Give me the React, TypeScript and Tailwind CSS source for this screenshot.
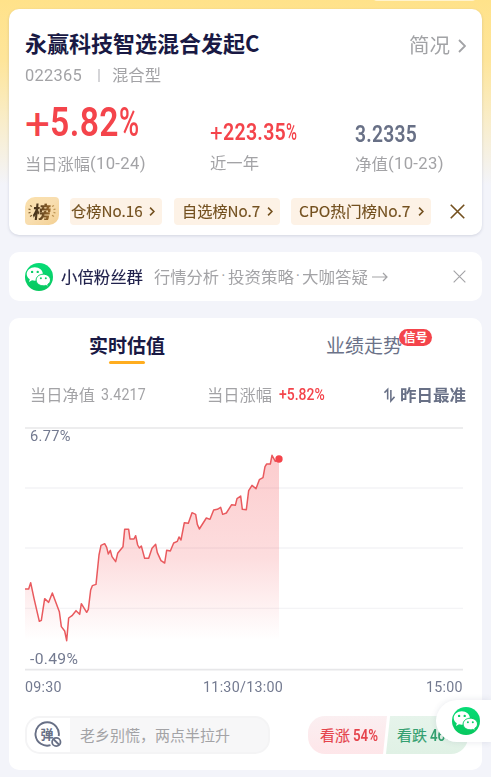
import { useLayoutEffect, useRef, useState, type ReactNode } from 'react';

const CJK = 'font-["Noto_Sans_CJK_SC",sans-serif]';
const DIN = 'font-["Roboto","Noto_Sans_CJK_SC",sans-serif]';
/* Weight between regular and bold for Chinese text. */
const SEMI = '[-webkit-text-stroke:0.15px_currentColor]';

/* Text condensed or widened horizontally so that it fills a fixed width. */
function Fit({ w, className = '', children }: { w: number; className?: string; children: ReactNode }) {
  const ref = useRef<HTMLSpanElement>(null);
  const [k, setK] = useState(1);
  useLayoutEffect(() => {
    if (ref.current) setK(w / ref.current.offsetWidth);
  }, [w]);
  return (
    <span className={`block shrink-0 leading-none ${className}`} style={{ width: w }}>
      <span ref={ref} className="inline-block origin-left whitespace-nowrap" style={{ transform: `scaleX(${k})` }}>
        {children}
      </span>
    </span>
  );
}

function Chevron({ className }: { className: string }) {
  return (
    <svg viewBox="0 0 8 14" fill="none" stroke="currentColor" className={`shrink-0 ${className}`}>
      <path d="M1 1l6 6-6 6" vectorEffect="non-scaling-stroke" />
    </svg>
  );
}

function Cross({ className }: { className: string }) {
  return (
    <svg viewBox="0 0 14 14" fill="none" stroke="currentColor" className={`shrink-0 ${className}`}>
      <path d="M.7.7l12.6 12.6M13.3.7L.7 13.3" />
    </svg>
  );
}

function WeChat({ className }: { className: string }) {
  return (
    <svg viewBox="0 0 28 28" className={`shrink-0 ${className}`}>
      <defs>
        <linearGradient id="wx" x1="0" y1="0" x2="0" y2="1">
          <stop offset="0" stopColor="#06dc76" />
          <stop offset="1" stopColor="#08c85f" />
        </linearGradient>
      </defs>
      <circle cx="14" cy="14" r="14" fill="url(#wx)" />
      <path d="M9.800 4.200c-4.500 0-8.100 3-8.100 6.800 0 2.200 1.200 4.100 3.100 5.300l-.8 2.600 3-1.600c.9.300 1.800.4 2.800.4 4.500 0 8.100-3 8.100-6.700s-3.600-6.800-8.100-6.800z" fill="#fff" />
      <path d="M18.300 11.200c-4 0-7.200 2.600-7.200 5.800s3.200 5.800 7.200 5.800c.9 0 1.700-.1 2.500-.4l2.500 1.300-.6-2.200c1.700-1.100 2.800-2.700 2.800-4.500 0-3.200-3.200-5.800-7.200-5.800z" fill="#fff" stroke="#0acd67" strokeWidth="1" />
      <g fill="#0acd67">
        <circle cx="7.100" cy="8.900" r="1.200" />
        <circle cx="12.700" cy="8.900" r="1.200" />
        <circle cx="15.900" cy="15.300" r="1" />
        <circle cx="20.800" cy="15.300" r="1" />
      </g>
    </svg>
  );
}

function RankBadge() {
  return (
    <div className="flex h-7 w-[34px] shrink-0 items-center justify-center rounded-[4px] rounded-tl-[10px] rounded-br-[10px] bg-gradient-to-br from-[#fbe0ab] via-[#f8deb0] to-[#f3cf91]">
      <svg viewBox="0 0 5 14" className="h-3.5 w-[5px]" stroke="#80602f" strokeWidth="1.300" fill="none">
        <path d="M2 1.500l2 1M.5 5l2 .7M.5 9l2-.6M2 12.500l2-1.200" />
      </svg>
      <span className={`${CJK} -skew-x-6 bg-gradient-to-r from-[#3c2c18] to-[#9b6a2c] bg-clip-text text-[18px] leading-none font-black text-transparent`}>榜</span>
      <svg viewBox="0 0 5 14" className="h-3.5 w-[5px]" stroke="#bd9353" strokeWidth="1.300" fill="none">
        <path d="M3 1.500l-2 1M4.500 5l-2 .7M4.500 9l-2-.6M3 12.500l-2-1.200" />
      </svg>
    </div>
  );
}

function RankPill({ text, w, className }: { text: string; w: number; className: string }) {
  return (
    <div className={`flex h-[27px] shrink-0 items-center justify-between rounded-[4px] bg-[#fdf2e6] pr-[7px] text-[#73501f] ${className}`}>
      <Fit w={w} className={`${CJK} ${SEMI} pb-[2px] text-[15px]`}>{text}</Fit>
      <Chevron className="h-[9px] w-[6px] stroke-[1.600]" />
    </div>
  );
}

/* Caption under a figure: a Chinese name followed by a date in brackets. */
function Caption({ name, w, date }: { name: string; w: number; date?: string }) {
  return (
    <div className="flex items-center pt-[2px] text-[#a3a3a6]">
      <Fit w={w} className={`${CJK} text-[16px]`}>{name}</Fit>
      {date && <Fit w={56} className={`${DIN} pt-px text-[17px] tracking-[0.3px]`}>{date}</Fit>}
    </div>
  );
}

function Summary() {
  return (
    <section className="h-[226px] rounded-[10px] bg-white pt-[19px] pr-4 pl-4 shadow-[0_1px_3px_rgba(60,70,110,0.18)]">
      <div className="flex h-[31px] items-center justify-between">
        <Fit w={234} className={`${CJK} pb-[3px] text-[22px] font-bold text-[#191944]`}>永赢科技智选混合发起C</Fit>
        <div className="flex items-center gap-[8px] pt-1 text-[#a2a3a6]">
          <Fit w={41} className={`${CJK} pb-px text-[20px]`}>简况</Fit>
          <Chevron className="h-3.5 w-2 stroke-[1.800]" />
        </div>
      </div>
      <div className="flex h-8 items-center text-[#a3a3a6]">
        <Fit w={57} className={`${DIN} text-[17px] tracking-[0.3px]`}>022365</Fit>
        <span className="mr-3 ml-[16px] h-[13px] w-[2px] bg-[#d5d5d8]" />
        <Fit w={49} className={`${CJK} pb-[3px] text-[16px]`}>混合型</Fit>
      </div>
      <div className="grid h-[106px] grid-cols-[185px_144px_1fr]">
        <div>
          <div className="flex h-[61px] items-center text-[#f4444b]">
            <Fit w={25} className={`${DIN} pt-1 text-[44px]`}>+</Fit>
            <Fit w={69} className={`${DIN} pt-[2px] text-[41px] font-semibold tracking-[0.5px]`}>5.82</Fit>
            <Fit w={20} className={`${DIN} pt-[2px] text-[41px] font-medium`}>%</Fit>
          </div>
          <Caption name="当日涨幅" w={65} date="(10-24)" />
        </div>
        <div>
          <div className="flex h-[61px] items-center pt-[21px] text-[#f4444b]">
            <Fit w={13} className={`${DIN} pt-[2px] text-[24px]`}>+</Fit>
            <Fit w={63} className={`${DIN} pt-px text-[23px] font-semibold tracking-[0.3px]`}>223.35</Fit>
            <Fit w={11} className={`${DIN} pt-px text-[23px] font-medium`}>%</Fit>
          </div>
          <Caption name="近一年" w={49} />
        </div>
        <div className="pl-px">
          <div className="flex h-[61px] items-center pt-[26px]">
            <Fit w={62} className={`${DIN} text-[23px] font-semibold tracking-[0.3px] text-[#687086]`}>3.2335</Fit>
          </div>
          <Caption name="净值" w={33} date="(10-23)" />
        </div>
      </div>
      <div className="flex h-7 items-center">
        <RankBadge />
        <RankPill text="仓榜No.16" w={72} className="ml-[11px] w-[92px] pl-px" />
        <RankPill text="自选榜No.7" w={78} className="ml-3 w-[106px] pl-[8px]" />
        <RankPill text="CPO热门榜No.7" w={111} className="ml-[11px] w-[140px] pl-[8px]" />
        <Cross className="ml-[19px] size-[15px] stroke-[1.500] text-[#73501f]" />
      </div>
    </section>
  );
}

function FanGroup() {
  return (
    <section className="mt-[17px] flex h-[49px] items-center rounded-[10px] bg-white px-4">
      <WeChat className="size-[28px]" />
      <Fit w={82} className={`${CJK} ${SEMI} ml-[8px] pb-px text-[16px] text-[#20214c]`}>小倍粉丝群</Fit>
      <div className="ml-[11px] flex w-[214px] items-center justify-between pb-px text-[#a3a3a6]">
        <Fit w={65} className={`${CJK} text-[16px]`}>行情分析</Fit>
        <span className={`${DIN} w-1 text-center text-[16px] leading-none`}>·</span>
        <Fit w={66} className={`${CJK} text-[16px]`}>投资策略</Fit>
        <span className={`${DIN} w-1 text-center text-[16px] leading-none`}>·</span>
        <Fit w={66} className={`${CJK} text-[16px]`}>大咖答疑</Fit>
      </div>
      <svg viewBox="0 0 16 10" className="ml-1 h-2.5 w-4" fill="none" stroke="#a3a3a6" strokeWidth="1.200">
        <path d="M0 5h15M11 1l4 4-4 4" />
      </svg>
      <Cross className="ml-auto size-[13px] stroke-[1.200] text-[#a3a3a6]" />
    </section>
  );
}

/* Intraday estimate, in units of a third of a pixel. */
const LINE =
  '75,447 86,447 92,428 102,475 118,544 124,541 134,476 146,487 157,459 178,515 184,560 194,573 200,602 206,534 216,527 228,512 239,523 244,491 260,517 265,508 272,450 277,437 288,433 297,345 303,316 314,311 320,322 325,342 331,331 336,350 347,365 353,340 369,320 374,268 386,268 390,297 402,297 407,287 413,315 418,324 424,318 434,355 446,355 456,325 467,313 472,338 483,362 494,369 500,331 511,333 521,309 532,304 537,291 543,300 553,248 565,250 576,218 587,223 592,253 598,267 619,234 630,238 641,210 652,208 662,202 668,223 679,219 695,194 706,196 711,176 722,168 727,208 739,209 746,152 756,136 768,146 778,119 789,113 795,80 800,72 811,72 816,46 826,64 837,57';

function Chart() {
  return (
    <div className="relative h-[244px] w-[438px]">
      <svg viewBox="75 -39 1314 732" className="block h-full w-full">
        <defs>
          <linearGradient id="area" gradientUnits="userSpaceOnUse" x1="0" y1="46" x2="0" y2="600">
            <stop offset="0" stopColor="#f5565b" stopOpacity=".3" />
            <stop offset=".55" stopColor="#f5565b" stopOpacity=".2" />
            <stop offset="1" stopColor="#f5565b" stopOpacity="0" />
          </linearGradient>
        </defs>
        <g strokeWidth="4">
          <path d="M75-36H1389M75 689H1389" stroke="#e7e7e9" strokeWidth="5" />
          <path d="M75 144H1389M75 324H1389M75 505H1389" stroke="#f4f4f6" />
        </g>
        <polygon points={`75,605 ${LINE} 837,605`} fill="url(#area)" />
        <polyline points={LINE} fill="none" stroke="#e95a5e" strokeWidth="4.500" strokeLinejoin="round" />
        <circle cx="837" cy="57" r="11" fill="#f4444b" />
      </svg>
      <Fit w={41} className={`${DIN} absolute top-[2px] left-[5px] text-[15px] tracking-[0.3px] text-[#737a90]`}>6.77%</Fit>
      <Fit w={48} className={`${DIN} absolute bottom-[4px] left-[5px] text-[15px] tracking-[0.3px] text-[#737a90]`}>-0.49%</Fit>
    </div>
  );
}

function BottomBar() {
  return (
    <div className="mt-[17px] flex h-[38px] items-center justify-between">
      <div className="flex h-[38px] w-[245px] items-center overflow-hidden rounded-[15px] border-2 border-[#f4f4f5] bg-[#f7f7f8]">
        <div className="flex h-full w-[43px] items-center bg-white pl-[7px]">
          <svg viewBox="0 0 28 28" className="size-7" fill="none" stroke="#687086">
            <path d="M16.500 24.200A11.700 11.700 0 1 1 24.700 15" strokeWidth="1.900" />
            <text x="13" y="18" textAnchor="middle" fontSize="13" fontWeight="700" fill="#687086" stroke="none" fontFamily="Noto Sans CJK SC, sans-serif">弹</text>
            <circle cx="22.300" cy="21" r="4.200" strokeWidth="1.800" />
            <path d="M19.300 18l6 6" strokeWidth="1.800" />
          </svg>
        </div>
        <Fit w={150} className={`${CJK} ml-[10px] pb-[2px] text-[15px] text-[#a3a3a6]`}>老乡别慌，两点半拉升</Fit>
      </div>
      <div className="mr-[-3px] flex h-[38px] w-[161px]">
        <div className="flex w-[79px] items-center rounded-l-[17px] bg-gradient-to-b from-[#fbeff1] to-[#fee6e9] pl-3 text-[#e5444c] [clip-path:polygon(0_0,100%_0,95%_100%,0_100%)]">
          <Fit w={30} className={`${CJK} ${SEMI} pb-[2px] text-[15px]`}>看涨</Fit>
          <Fit w={25} className={`${DIN} ml-[3px] text-[17px] font-semibold`}>54%</Fit>
        </div>
        <div className="-ml-px flex w-[82px] items-center rounded-r-[17px] bg-gradient-to-b from-[#e6f4eb] to-[#e0f1e5] pl-[11px] text-[#34a070] [clip-path:polygon(5%_0,100%_0,100%_100%,0_100%)]">
          <Fit w={30} className={`${CJK} ${SEMI} pb-[2px] text-[15px]`}>看跌</Fit>
          <Fit w={25} className={`${DIN} ml-[3px] text-[17px] font-semibold`}>46%</Fit>
        </div>
      </div>
    </div>
  );
}

function Valuation() {
  return (
    <section className="mt-[17px] h-[452px] rounded-[10px] bg-white px-4">
      <div className="flex h-[54px] pt-[14px] pl-16">
        <div className="flex w-[76px] flex-col items-center">
          <Fit w={76} className={`${CJK} h-[29px] pt-[3px] text-[19px] font-bold text-[#191944]`}>实时估值</Fit>
          <span className="h-[3px] w-9 shrink-0 rounded-full bg-[#ffad1f]" />
        </div>
        <div className="relative ml-[161px]">
          <Fit w={76} className={`${CJK} pt-[3px] text-[19px] text-[#6b7288]`}>业绩走势</Fit>
          <span className={`${CJK} absolute top-[-3px] left-[73px] flex h-[17px] w-[33px] items-center justify-center rounded-full bg-[#f4444b] pb-px text-[12px] leading-none font-bold text-white`}>信号</span>
        </div>
      </div>
      <div className="flex h-[46px] items-center pl-[5px] text-[#a3a3a6]">
        <Fit w={65} className={`${CJK} pb-[3px] text-[16px]`}>当日净值</Fit>
        <Fit w={45} className={`${DIN} ml-[6px] pb-px text-[17px] tracking-[0.3px]`}>3.4217</Fit>
        <Fit w={65} className={`${CJK} ml-[61px] pb-[3px] text-[16px]`}>当日涨幅</Fit>
        <Fit w={46} className={`${DIN} ml-[7px] pb-px text-[17px] font-medium text-[#f4444b]`}>+5.82%</Fit>
        <svg viewBox="0 0 12 16" className="ml-[59px] h-4 w-3" fill="none" stroke="#687086" strokeWidth="1.700">
          <path d="M.5 5.500L4 2v11M7.500 2.500v12L11.500 10" />
        </svg>
        <Fit w={66} className={`${CJK} ml-[5px] pb-[3px] text-[16px] font-bold text-[#687086]`}>昨日最准</Fit>
      </div>
      <div className="h-[9px]" />
      <Chart />
      <div className="grid h-[28px] w-[438px] grid-cols-[178px_223px_37px] items-center pt-[4px] text-[15px] tracking-[0.3px] text-[#737a90]">
        <Fit w={37} className={DIN}>09:30</Fit>
        <Fit w={80} className={DIN}>11:30/13:00</Fit>
        <Fit w={37} className={DIN}>15:00</Fit>
      </div>
      <BottomBar />
    </section>
  );
}

export default function App() {
  return (
    <main className="relative h-[777px] w-[491px] overflow-hidden bg-[#f3f4fa] bg-[linear-gradient(to_bottom,#ffe28a_0,#fee59a_60px,#f9edc9_120px,#f3f4fa_185px)] px-[9px] pt-[9px]">
      <div className="absolute top-[-9px] right-[14px] h-[10px] w-[105px] rounded-full bg-[#fff3cc]" />
      <Summary />
      <FanGroup />
      <Valuation />
      <div className="absolute top-[700px] right-0 flex h-[42px] w-[55px] items-center rounded-l-[21px] bg-white pl-4 shadow-[0_0_6px_rgba(60,70,110,0.12)]">
        <WeChat className="size-[28px]" />
      </div>
    </main>
  );
}
